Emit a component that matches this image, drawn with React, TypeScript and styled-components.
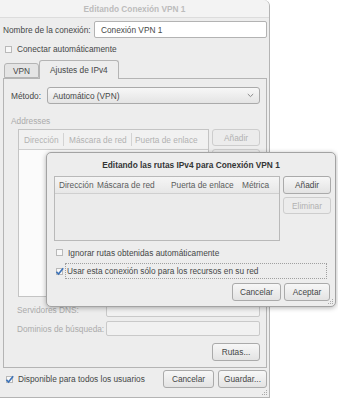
import styled, { createGlobalStyle } from 'styled-components'

const GlobalStyle = createGlobalStyle`
  html, body {
    margin: 0;
    padding: 0;
    background: #ffffff;
  }
  body {
    font-family: 'Liberation Sans', Arial, sans-serif;
    font-size: 8.3px;
    color: #454747;
  }
  * {
    box-sizing: border-box;
  }
`

const Page = styled.div`
  position: relative;
  width: 338px;
  height: 400px;
  overflow: hidden;
`

const Window = styled.div`
  position: relative;
  width: 270px;
  height: 398px;
  background: #ededed;
  border-right: 1px solid #b4b4b4;
  border-bottom: 1px solid #b4b4b4;
  border-top-right-radius: 6px;
  display: flex;
  flex-direction: column;
  padding: 0 2px 0 3px;
`

const TitleBar = styled.div`
  height: 18px;
  margin: 0 -2px 0 -3px;
  background: #f3f3f3;
  border-bottom: 1px solid #dcdcdc;
  border-top-right-radius: 6px;
  display: flex;
  align-items: center;
  justify-content: center;
  color: #bcbcbc;
  font-weight: bold;
`

const Row = styled.div<{ $h: number; $mt: number }>`
  display: flex;
  align-items: center;
  height: ${({ $h }) => $h}px;
  margin-top: ${({ $mt }) => $mt}px;
  flex-shrink: 0;
`

const Label = styled.span<{ $w?: number; $dim?: boolean }>`
  width: ${({ $w }) => ($w ? `${$w}px` : 'auto')};
  flex-shrink: 0;
  white-space: nowrap;
  color: ${({ $dim }) => ($dim ? '#ababab' : 'inherit')};
`

const Entry = styled.div<{ $dim?: boolean }>`
  flex: 1;
  height: 100%;
  background: ${({ $dim }) => ($dim ? '#f1f1f1' : '#ffffff')};
  border: 1px solid ${({ $dim }) => ($dim ? '#c9c9c9' : '#b3b3b3')};
  border-radius: 2px;
  display: flex;
  align-items: center;
  padding-left: 6px;
`

const Button = styled.div<{ $w: number; $h?: number; $off?: boolean }>`
  width: ${({ $w }) => $w}px;
  height: ${({ $h }) => $h ?? 18}px;
  flex-shrink: 0;
  border: 1px solid ${({ $off }) => ($off ? '#cdcdcd' : '#aaaaaa')};
  border-radius: 3px;
  background: ${({ $off }) =>
    $off ? '#ececec' : 'linear-gradient(#f7f7f7, #e3e3e3)'};
  color: ${({ $off }) => ($off ? '#b1b1b1' : '#454747')};
  display: flex;
  align-items: center;
  justify-content: center;
  white-space: nowrap;
`

const Tabs = styled.div`
  display: flex;
  align-items: flex-end;
  height: 18px;
  margin-top: 4px;
  padding-left: 1px;
  position: relative;
  z-index: 1;
`

const Tab = styled.div<{ $active?: boolean }>`
  height: ${({ $active }) => ($active ? 19 : 15)}px;
  margin-bottom: ${({ $active }) => ($active ? -1 : 0)}px;
  padding: 0 ${({ $active }) => ($active ? 10 : 8)}px;
  border: 1px solid #b4b4b4;
  border-bottom: ${({ $active }) => ($active ? 'none' : '1px solid #b4b4b4')};
  border-radius: 3px 3px 0 0;
  background: ${({ $active }) => ($active ? '#ededed' : '#e4e4e4')};
  display: flex;
  align-items: center;
  padding-bottom: ${({ $active }) => ($active ? 1 : 0)}px;
`

const Panel = styled.div`
  height: 290px;
  border: 1px solid #b4b4b4;
  display: flex;
  flex-direction: column;
  padding: 8px 6px 0 7px;
`

const Section = styled.div`
  display: flex;
  gap: 3px;
  margin-top: 3px;
  margin-left: 7px;
  height: 168px;
  flex-shrink: 0;
`

const ButtonColumn = styled.div`
  display: flex;
  flex-direction: column;
  gap: 3px;
`

const AddrTable = styled.div`
  width: 191px;
  height: 100%;
  border: 1px solid #c4c4c4;
  background: #fbfbfb;
`

const TableHead = styled.div<{ $cols: string; $dim?: boolean }>`
  display: grid;
  grid-template-columns: ${({ $cols }) => $cols};
  height: ${({ $dim }) => ($dim ? 20 : 17)}px;
  border-bottom: 1px solid #cfcfcf;
  background: ${({ $dim }) => ($dim ? '#f1f1f1' : 'linear-gradient(#f5f5f5, #e7e7e7)')};
  color: ${({ $dim }) => ($dim ? '#b1b1b1' : '#5a5c5c')};
`

const HeadCell = styled.div<{ $sep?: boolean; $pl?: number }>`
  display: flex;
  align-items: center;
  white-space: nowrap;
  padding-left: ${({ $pl }) => $pl ?? 5}px;
  border-right: ${({ $sep }) => ($sep ? '1px solid #d3d3d3' : 'none')};
  margin: ${({ $sep }) => ($sep ? '3px 0' : '0')};
`

const Select = styled.div`
  flex: 1;
  height: 100%;
  border: 1px solid #aaaaaa;
  border-radius: 3px;
  background: linear-gradient(#f7f7f7, #e4e4e4);
  display: flex;
  align-items: center;
  justify-content: space-between;
  padding: 0 5px 0 5px;
`

const RightAlign = styled.div<{ $mt: number }>`
  display: flex;
  justify-content: flex-end;
  gap: 4px;
  margin-top: ${({ $mt }) => $mt}px;
`

const BottomRow = styled.div`
  display: flex;
  align-items: center;
  height: 18px;
  margin-top: 2px;
  padding-left: 2px;
`

const Spacer = styled.div`
  flex: 1;
`

const Dialog = styled.div`
  position: absolute;
  left: 46px;
  top: 152px;
  width: 290px;
  height: 155px;
  background: #ededed;
  border: 1px solid #a3a3a3;
  border-radius: 5px;
  box-shadow: 0 1px 5px rgba(0, 0, 0, 0.3);
  padding: 0 4px 0 7px;
  display: flex;
  flex-direction: column;
`

const DialogTitle = styled.div`
  height: 23px;
  display: flex;
  align-items: center;
  justify-content: center;
  font-weight: bold;
  color: #333535;
  padding-right: 3px;
`

const RouteTable = styled.div`
  width: 226px;
  height: 65px;
  border: 1px solid #b9b9b9;
  background: #ebebeb;
`

const CheckLine = styled.div<{ $h: number; $mt: number }>`
  display: flex;
  align-items: center;
  height: ${({ $h }) => $h}px;
  margin-top: ${({ $mt }) => $mt}px;
  padding-left: 1px;
`

const CheckText = styled.div<{ $focus?: boolean; $ml: number }>`
  margin-left: ${({ $ml }) => $ml}px;
  height: 100%;
  flex: ${({ $focus }) => ($focus ? 1 : 'none')};
  margin-right: ${({ $focus }) => ($focus ? 4 : 0)}px;
  display: flex;
  align-items: center;
  padding-left: 1px;
  border: 1px dotted ${({ $focus }) => ($focus ? '#a0a0a0' : 'transparent')};
  white-space: nowrap;
`

const Grip = styled.svg`
  position: absolute;
  right: 1px;
  bottom: 1px;
`

const Check = ({ on }: { on?: boolean }) => (
  <svg width="9" height="9" viewBox="0 0 9 9">
    <rect x="1.5" y="1.5" width="6" height="6" fill="#f8f8f8" stroke="#b9b9b9" />
    {on && (
      <path d="M1.4 4.8 L3.5 7 L8.2 1.3" fill="none" stroke="#3c72b8" strokeWidth="1.6" />
    )}
  </svg>
)

const GripDots = () => (
  <Grip width="6" height="6" viewBox="0 0 6 6">
    {[
      [4.5, 0.5], [4.5, 2.5], [2.5, 2.5], [4.5, 4.5], [2.5, 4.5], [0.5, 4.5],
    ].map(([x, y]) => (
      <rect key={`${x}-${y}`} x={x - 0.5} y={y - 0.5} width="1" height="1" fill="#a9a9a9" />
    ))}
  </Grip>
)

export default function App() {
  return (
    <Page>
      <GlobalStyle />
      <Window>
        <TitleBar>Editando Conexión VPN 1</TitleBar>
        <Row $h={17} $mt={3}>
          <Label $w={91}>Nombre de la conexión:</Label>
          <Entry>Conexión VPN 1</Entry>
        </Row>
        <Row $h={14} $mt={4}>
          <span style={{ marginLeft: 1 }} />
          <Check />
          <Label style={{ marginLeft: 4 }}>Conectar automáticamente</Label>
        </Row>
        <Tabs>
          <Tab>VPN</Tab>
          <Tab $active>Ajustes de IPv4</Tab>
        </Tabs>
        <Panel>
          <Row $h={17} $mt={0}>
            <Label $w={36}>Método:</Label>
            <Select>
              <span>Automático (VPN)</span>
              <svg width="7" height="5" viewBox="0 0 7 5">
                <path d="M0.8 1 L3.5 3.6 L6.2 1" fill="none" stroke="#8a8a8a" strokeWidth="1" />
              </svg>
            </Select>
          </Row>
          <Row $h={10} $mt={12}>
            <Label $dim>Addresses</Label>
          </Row>
          <Section>
            <AddrTable>
              <TableHead $cols="45px 68px 1fr" $dim>
                <HeadCell $sep>Dirección</HeadCell>
                <HeadCell $sep>Máscara de red</HeadCell>
                <HeadCell $pl={3}>Puerta de enlace</HeadCell>
              </TableHead>
            </AddrTable>
            <ButtonColumn>
              <Button $w={48} $h={17} $off>Añadir</Button>
              <Button $w={48} $h={17} $off />
            </ButtonColumn>
          </Section>
          <Row $h={15} $mt={5} style={{ marginLeft: 6 }}>
            <Label $w={89} $dim>Servidores DNS:</Label>
            <Entry $dim />
          </Row>
          <Row $h={15} $mt={4} style={{ marginLeft: 6 }}>
            <Label $w={89} $dim>Dominios de búsqueda:</Label>
            <Entry $dim />
          </Row>
          <RightAlign $mt={7}>
            <Button $w={48}>Rutas...</Button>
          </RightAlign>
        </Panel>
        <BottomRow>
          <Check on />
          <Label style={{ marginLeft: 4 }}>Disponible para todos los usuarios</Label>
          <Spacer />
          <Button $w={51}>Cancelar</Button>
          <span style={{ width: 4 }} />
          <Button $w={49}>Guardar...</Button>
        </BottomRow>
        <GripDots />
      </Window>

      <Dialog>
        <DialogTitle>Editando las rutas IPv4 para Conexión VPN 1</DialogTitle>
        <Row $h={65} $mt={0} style={{ alignItems: 'flex-start', gap: 3 }}>
          <RouteTable>
            <TableHead $cols="37px 74px 71px 1fr">
              <HeadCell $pl={4}>Dirección</HeadCell>
              <HeadCell>Máscara de red</HeadCell>
              <HeadCell>Puerta de enlace</HeadCell>
              <HeadCell>Métrica</HeadCell>
            </TableHead>
          </RouteTable>
          <ButtonColumn>
            <Button $w={48}>Añadir</Button>
            <Button $w={48} $h={17} $off>Eliminar</Button>
          </ButtonColumn>
        </Row>
        <CheckLine $h={15} $mt={4}>
          <Check />
          <CheckText $ml={2}>Ignorar rutas obtenidas automáticamente</CheckText>
        </CheckLine>
        <CheckLine $h={16} $mt={3}>
          <Check on />
          <CheckText $ml={1} $focus>Usar esta conexión sólo para los recursos en su red</CheckText>
        </CheckLine>
        <RightAlign $mt={4} style={{ gap: 3, marginRight: 1 }}>
          <Button $w={49}>Cancelar</Button>
          <Button $w={46}>Aceptar</Button>
        </RightAlign>
        <GripDots />
      </Dialog>
    </Page>
  )
}
